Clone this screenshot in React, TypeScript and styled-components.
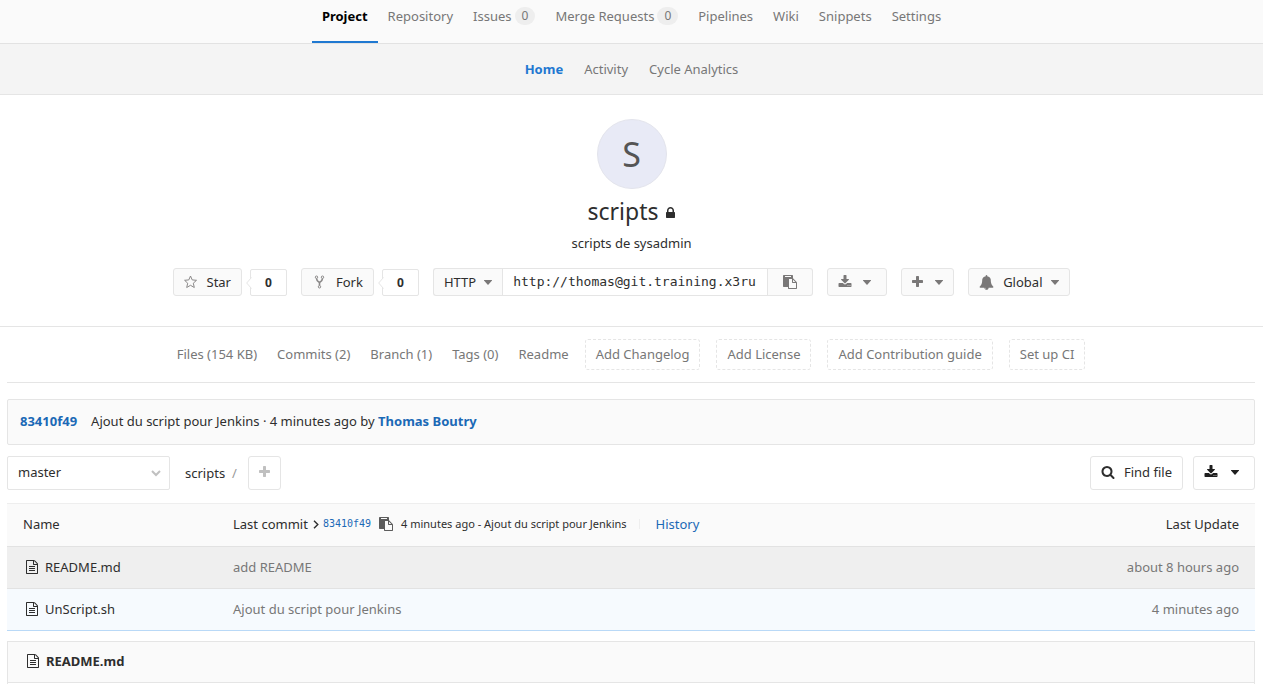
import React from "react";
import styled, { createGlobalStyle, css } from "styled-components";

const color = {
  text: "#2e2e2e",
  muted: "#777777",
  border: "#e5e5e5",
  light: "#fafafa",
  link: "#1b69b6",
  accent: "#1f78d1",
  icon: "#7a7878",
};

const GlobalStyle = createGlobalStyle`
  *, *::before, *::after { box-sizing: border-box; }
  body {
    margin: 0;
    background: #ffffff;
    color: ${color.text};
    font-family: "Noto Sans", sans-serif;
    font-size: 13px;
    line-height: 20px;
  }
  a { color: inherit; text-decoration: none; }
  button, input, select { font: inherit; color: inherit; margin: 0; }
  button { cursor: pointer; }
  svg { display: block; flex: none; }
`;

const Page = styled.div`
  display: flex;
  flex-direction: column;
  min-height: 100vh;
`;

/* Icons */

const glyphs = {
  download:
    "M1344 1344q0-26-19-45t-45-19-45 19-19 45 19 45 45 19 45-19 19-45zm256 0q0-26-19-45t-45-19-45 19-19 45 19 45 45 19 45-19 19-45zm128-224v320q0 40-28 68t-68 28h-1472q-40 0-68-28t-28-68v-320q0-40 28-68t68-28h465l135 136q58 56 136 56t136-56l136-136h464q40 0 68 28t28 68zm-325-569q17 41-14 70l-448 448q-18 19-45 19t-45-19l-448-448q-31-29-14-70 17-39 59-39h256v-448q0-26 19-45t45-19h256q26 0 45 19t19 45v448h256q42 0 59 39z",
  file:
    "M1596 380q28 28 48 76t20 88v1152q0 40-28 68t-68 28h-1344q-40 0-68-28t-28-68v-1600q0-40 28-68t68-28h896q40 0 88 20t76 48zm-444-244v376h376q-10-29-22-41l-313-313q-12-12-41-22zm384 1528v-1024h-416q-40 0-68-28t-28-68v-416h-768v1536h1280zm-1024-864q0-14 9-23t23-9h704q14 0 23 9t9 23v64q0 14-9 23t-23 9h-704q-14 0-23-9t-9-23v-64zm736 224q14 0 23 9t9 23v64q0 14-9 23t-23 9h-704q-14 0-23-9t-9-23v-64q0-14 9-23t23-9h704zm0 256q14 0 23 9t9 23v64q0 14-9 23t-23 9h-704q-14 0-23-9t-9-23v-64q0-14 9-23t23-9h704z",
  bell:
    "M912 1696q0-16-16-16-59 0-101.5-42.5t-42.5-101.5q0-16-16-16t-16 16q0 73 51.5 124.5t124.5 51.5q16 0 16-16zm816-288q0 52-38 90t-90 38h-448q0 106-75 181t-181 75-181-75-75-181h-448q-52 0-90-38t-38-90q50-42 91-88t85-119.5 74.5-158.5 50-206 19.5-260q0-152 117-282.5t307-158.5q-8-19-8-39 0-40 28-68t68-28 68 28 28 68q0 20-8 39 190 28 307 158.5t117 282.5q0 139 19.5 260t50 206 74.5 158.5 85 119.5 91 88z",
  search:
    "M1216 832q0-185-131.5-316.5t-316.5-131.5-316.5 131.5-131.5 316.5 131.5 316.5 316.5 131.5 316.5-131.5 131.5-316.5zm512 832q0 52-38 90t-90 38q-54 0-90-38l-343-342q-179 124-399 124-143 0-273.5-55.5t-225-150-150-225-55.5-273.5 55.5-273.5 150-225 225-150 273.5-55.5 273.5 55.5 225 150 150 225 55.5 273.5q0 220-124 399l343 343q37 37 37 90z",
  plus:
    "M1600 736v192q0 40-28 68t-68 28h-416v416q0 40-28 68t-68 28h-192q-40 0-68-28t-28-68v-416h-416q-40 0-68-28t-28-68v-192q0-40 28-68t68-28h416v-416q0-40 28-68t68-28h192q40 0 68 28t28 68v416h416q40 0 68 28t28 68z",
  lock:
    "M640 768h512v-192q0-106-75-181t-181-75-181 75-75 181v192zm832 96v576q0 40-28 68t-68 28h-960q-40 0-68-28t-28-68v-576q0-40 28-68t68-28h32v-192q0-184 132-316t316-132 316 132 132 316v192h32q40 0 68 28t28 68z",
  clipboard:
    "M768 1664h896v-640h-416q-40 0-68-28t-28-68v-416h-384v1152zm256-1440v-64q0-13-9.5-22.5t-22.5-9.5h-704q-13 0-22.5 9.5t-9.5 22.5v64q0 13 9.5 22.5t22.5 9.5h704q13 0 22.5-9.5t9.5-22.5zm256 672h299l-299-299v299zm512 128v672q0 40-28 68t-68 28h-960q-40 0-68-28t-28-68v-160h-544q-40 0-68-28t-28-68v-1344q0-40 28-68t68-28h1088q40 0 68 28t28 68v328q21 13 36 28l408 408q28 28 48 76t20 88z",
};

type GlyphProps = { name: keyof typeof glyphs; size?: number; width?: number; fill?: string };

/* A glyph narrower than its square is trimmed evenly on both sides. */
const Glyph = ({ name, size = 14, width = size, fill = color.icon }: GlyphProps) => {
  const span = (1792 * width) / size;
  return (
    <svg width={width} height={size} viewBox={`${(1792 - span) / 2} 0 ${span} 1792`} fill={fill} aria-hidden="true">
      <path d={glyphs[name]} />
    </svg>
  );
};

const Caret = ({ fill = color.icon }: { fill?: string }) => (
  <svg width="8" height="5" viewBox="0 0 8 5" fill={fill} aria-hidden="true">
    <path d="M0.4 0h7.200q0.800 0 0.200 0.800L4.500 4.600q-0.500 0.500-1 0L0.200 0.800Q-0.400 0 0.400 0z" />
  </svg>
);

const StarIcon = () => (
  <svg width="14" height="14" viewBox="0 0 14 14" fill="none" stroke="#8a8888" strokeLinejoin="round" aria-hidden="true">
    <path d="M6.500 1l1.700 3.900 4.300.4-3.200 2.900 1 4.300-3.800-2.200-3.800 2.200 1-4.300L.6 5.300l4.200-.4z" />
  </svg>
);

const ForkIcon = () => (
  <svg width="16" height="14" viewBox="0 0 16 14" fill="none" stroke="#8a8888" aria-hidden="true">
    <circle cx="4.500" cy="2.200" r="1.200" />
    <circle cx="10.500" cy="2.200" r="1.200" />
    <circle cx="7.500" cy="11.800" r="1.200" />
    <path d="M4.500 3.600c0 2 .8 2.700 3 4.100 2.200-1.400 3-2.100 3-4.100M7.500 7.500v3" strokeWidth="1.600" />
  </svg>
);

/* Navigation */

const MainNav = styled.nav`
  display: flex;
  justify-content: center;
  background: ${color.light};
  border-bottom: 1px solid #e2e2e2;
`;

const NavLink = styled.a<{ $active?: boolean }>`
  display: flex;
  align-items: center;
  gap: 3px;
  padding: 6px 10px 15px;
  color: ${color.muted};
  border-bottom: 2px solid transparent;
  ${(p) =>
    p.$active &&
    css`
      color: #000000;
      font-weight: 700;
      border-bottom-color: ${color.accent};
    `}
`;

const Badge = styled.span`
  padding: 0 7px;
  border-radius: 9px;
  background: #eeeeee;
  font-size: 12px;
  line-height: 18px;
`;

const SubNav = styled.nav`
  display: flex;
  justify-content: center;
  gap: 21px;
  padding: 15px 0;
  background: #f4f4f4;
  border-bottom: 1px solid ${color.border};
  color: ${color.muted};
`;

const SubLink = styled.a<{ $active?: boolean }>`
  color: ${(p) => (p.$active ? color.accent : "inherit")};
  font-weight: ${(p) => (p.$active ? 700 : 400)};
`;

/* Project header */

const ProjectHeader = styled.header`
  display: flex;
  flex-direction: column;
  align-items: center;
  padding: 24px 0 30px;
  border-bottom: 1px solid ${color.border};
`;

const Avatar = styled.div`
  width: 70px;
  height: 70px;
  border: 1px solid #e3e4ec;
  border-radius: 50%;
  background: #e8eaf6;
  color: #555555;
  font-size: 34px;
  line-height: 68px;
  text-align: center;
`;

const Title = styled.h1`
  display: flex;
  align-items: center;
  gap: 8px;
  margin: 6px 0;
  font-size: 23px;
  font-weight: 400;
  line-height: 32px;
`;

const LockMark = styled.span`
  padding-top: 4px;
`;

const Description = styled.p`
  margin: 0;
`;

const Actions = styled.div`
  display: flex;
  align-items: center;
  gap: 14px;
  margin-top: 15px;
  padding-right: 20px;
`;

const ActionGroup = styled.div<{ $gap?: number }>`
  display: flex;
  align-items: flex-end;
  gap: ${(p) => p.$gap ?? 0}px;
`;

const Button = styled.button<{ $gap?: number; $tall?: boolean; $end?: number; $join?: "left" | "right" }>`
  display: flex;
  align-items: center;
  justify-content: center;
  gap: ${(p) => p.$gap ?? 9}px;
  height: ${(p) => (p.$tall ? 34 : 28)}px;
  padding: 0 ${(p) => p.$end ?? 10}px ${(p) => (p.$tall ? 2 : 0)}px 10px;
  border: 1px solid ${color.border};
  border-radius: 3px;
  background: ${(p) => (p.$tall ? "#ffffff" : color.light)};
  white-space: nowrap;
  ${(p) => p.$join === "left" && "border-radius: 3px 0 0 3px; border-right: 0;"}
  ${(p) => p.$join === "right" && "border-radius: 0 3px 3px 0; border-left: 0; padding: 0 15px;"}
`;

const CountBox = styled.a`
  position: relative;
  width: 37px;
  height: 27px;
  border: 1px solid ${color.border};
  border-radius: 2px;
  background: #ffffff;
  font-weight: 700;
  font-size: 12px;
  line-height: 25px;
  text-align: center;
`;

const Pointer = styled.svg`
  position: absolute;
  left: -5px;
  top: 7px;
`;

const Count = ({ value, label }: { value: number; label: string }) => (
  <CountBox href="#" aria-label={label}>
    <Pointer width="6" height="12" viewBox="0 0 6 12" fill="#ffffff" stroke="#e5e5e5">
      <path d="M5.500 0.500L0.700 6L5.500 11.500" />
    </Pointer>
    {value}
  </CountBox>
);

const UrlInput = styled.input`
  width: 266px;
  height: 28px;
  padding: 0 10px 2px;
  border: 1px solid ${color.border};
  border-radius: 0;
  background: #ffffff;
  font-family: "DejaVu Sans Mono", monospace;
`;

/* Statistics row */

const Content = styled.main`
  display: flex;
  flex: 1;
  flex-direction: column;
  padding: 0 8px 0 7px;
`;

const Stats = styled.nav`
  display: flex;
  align-items: baseline;
  justify-content: center;
  gap: 16px;
  padding: 12px 0;
  border-bottom: 1px solid ${color.border};
  color: ${color.muted};
`;

const StatLinks = styled.div`
  display: flex;
  gap: 20px;
`;

const AddLink = styled.a`
  height: 31px;
  padding: 0 10px;
  border: 1px dashed ${color.border};
  border-radius: 3px;
  line-height: 29px;
`;

/* Commit and file toolbar */

const CommitBox = styled.section`
  margin-top: 16px;
  padding: 11px 12px 13px;
  border: 1px solid ${color.border};
  border-radius: 2px;
  background: ${color.light};
`;

const StrongLink = styled.a<{ $spaced?: boolean }>`
  margin-right: ${(p) => (p.$spaced ? 14 : 0)}px;
  color: ${color.link};
  font-weight: 700;
`;

const Toolbar = styled.div`
  display: flex;
  align-items: center;
  margin: 11px 0 13px;
`;

const SelectBox = styled.div`
  position: relative;
  width: 163px;
  margin-right: 15px;
`;

const BranchSelect = styled.select`
  display: block;
  width: 100%;
  height: 34px;
  padding: 0 10px 2px;
  appearance: none;
  border: 1px solid ${color.border};
  border-radius: 2px;
  background: #ffffff;
`;

const SelectArrow = styled.svg`
  position: absolute;
  right: 9px;
  top: 14px;
  pointer-events: none;
`;

const Slash = styled.span`
  margin: 0 11px 0 7px;
  color: #999999;
`;

const ToolbarEnd = styled.div`
  display: flex;
  gap: 10px;
  margin-left: auto;
`;

/* File table */

const FileTable = styled.table`
  width: 100%;
  border-collapse: separate;
  border-spacing: 0;
  border-top: 1px solid #eeeeee;
`;

const Row = styled.tr<{ $tone?: "hover" | "latest" }>`
  background: ${(p) => (p.$tone === "hover" ? "#efefef" : p.$tone === "latest" ? "#f6fafe" : color.light)};
  color: ${(p) => (p.$tone ? color.muted : color.text)};
  td, th {
    height: ${(p) => (p.$tone ? 42 : 43)}px;
    padding: 0 16px 2px 0;
    border-bottom: 1px solid ${(p) => (p.$tone === "latest" ? "#b9d9f7" : "#e2e2e2")};
    font-weight: 400;
    text-align: left;
  }
  td:first-child, th:first-child {
    width: 226px;
    padding-left: 16px;
  }
  td:last-child, th:last-child {
    text-align: right;
  }
`;

const FileName = styled.a<{ $bold?: boolean }>`
  display: flex;
  align-items: center;
  gap: 6px;
  padding-left: 2px;
  color: ${color.text};
  font-weight: ${(p) => (p.$bold ? 700 : 400)};
`;

const LastCommit = styled.div`
  display: flex;
  align-items: center;
`;

const Hash = styled.a`
  margin: 0 8px 0 4px;
  color: ${color.link};
  font-family: "DejaVu Sans Mono", monospace;
  font-size: 10px;
`;

const CopyButton = styled.button`
  padding: 0;
  border: 0;
  background: none;
`;

const CommitNote = styled.span`
  margin: 0 12px 0 8px;
  font-size: 11px;
`;

const HistoryLink = styled.a`
  padding-left: 16px;
  color: ${color.link};
`;

const Divider = styled.span`
  width: 1px;
  height: 10px;
  background: #eeeeee;
`;

const AngleRight = styled.svg`
  margin-left: 5px;
`;

/* Readme */

const ReadmePanel = styled.section`
  flex: 1;
  margin-top: 10px;
  border: 1px solid ${color.border};
  border-bottom: 0;
`;

const ReadmeHead = styled.h2`
  margin: 0;
  padding: 9px 16px 11px;
  border-bottom: 1px solid ${color.border};
  background: ${color.light};
  font-size: 13px;
`;

const navItems = [
  { label: "Project", active: true },
  { label: "Repository" },
  { label: "Issues", count: 0 },
  { label: "Merge Requests", count: 0 },
  { label: "Pipelines" },
  { label: "Wiki" },
  { label: "Snippets" },
  { label: "Settings" },
];

const stats = ["Files (154 KB)", "Commits (2)", "Branch (1)", "Tags (0)", "Readme"];
const additions = ["Add Changelog", "Add License", "Add Contribution guide", "Set up CI"];

const files = [
  { name: "README.md", message: "add README", updated: "about 8 hours ago", tone: "hover" as const },
  { name: "UnScript.sh", message: "Ajout du script pour Jenkins", updated: "4 minutes ago", tone: "latest" as const },
];

export default function App() {
  return (
    <Page>
      <GlobalStyle />
      <MainNav aria-label="Project">
        {navItems.map((item) => (
          <NavLink key={item.label} href="#" $active={item.active}>
            {item.label}
            {item.count !== undefined && <Badge>{item.count}</Badge>}
          </NavLink>
        ))}
      </MainNav>
      <SubNav aria-label="Project pages">
        <SubLink href="#" $active>Home</SubLink>
        <SubLink href="#">Activity</SubLink>
        <SubLink href="#">Cycle Analytics</SubLink>
      </SubNav>

      <ProjectHeader>
        <Avatar>S</Avatar>
        <Title>
          scripts
          <LockMark><Glyph name="lock" width={9} fill={color.text} /></LockMark>
        </Title>
        <Description>scripts de sysadmin</Description>
        <Actions>
          <ActionGroup $gap={8}>
            <Button type="button"><StarIcon />Star</Button>
            <Count value={0} label="Stars" />
          </ActionGroup>
          <ActionGroup $gap={8}>
            <Button type="button" $gap={8}><ForkIcon />Fork</Button>
            <Count value={0} label="Forks" />
          </ActionGroup>
          <ActionGroup>
            <Button type="button" $gap={8} $join="left">HTTP<Caret /></Button>
            <UrlInput type="text" readOnly aria-label="Project clone URL" value="http://thomas@git.training.x3ru" />
            <Button type="button" $join="right" aria-label="Copy URL"><Glyph name="clipboard" /></Button>
          </ActionGroup>
          <Button type="button" $gap={11} $end={15} aria-label="Download"><Glyph name="download" /><Caret /></Button>
          <Button type="button" $gap={12} aria-label="Create new"><Glyph name="plus" width={11} /><Caret /></Button>
          <Button type="button" aria-label="Notifications: Global"><Glyph name="bell" size={15} />Global<Caret /></Button>
        </Actions>
      </ProjectHeader>

      <Content>
        <Stats aria-label="Project statistics">
          <StatLinks>
            {stats.map((s) => <a key={s} href="#">{s}</a>)}
          </StatLinks>
          {additions.map((s) => <AddLink key={s} href="#">{s}</AddLink>)}
        </Stats>

        <CommitBox>
          <StrongLink href="#" $spaced>83410f49</StrongLink>
          <a href="#">Ajout du script pour Jenkins</a> · 4 minutes ago by <StrongLink href="#">Thomas Boutry</StrongLink>
        </CommitBox>

        <Toolbar>
          <SelectBox>
            <BranchSelect aria-label="Branch" defaultValue="master">
              <option>master</option>
            </BranchSelect>
            <SelectArrow width="10" height="7" viewBox="0 0 10 7" fill="none" stroke="#c0c0c0" strokeWidth="2">
              <path d="M1 1l4 4 4-4" />
            </SelectArrow>
          </SelectBox>
          <a href="#">scripts</a>
          <Slash>/</Slash>
          <Button type="button" $tall aria-label="Add to tree"><Glyph name="plus" width={11} fill="#c0c0c0" /></Button>
          <ToolbarEnd>
            <Button type="button" $tall><Glyph name="search" fill={color.text} />Find file</Button>
            <Button type="button" $tall $gap={13} $end={15} aria-label="Download source">
              <Glyph name="download" fill="#1f1f1f" /><Caret fill="#1f1f1f" />
            </Button>
          </ToolbarEnd>
        </Toolbar>

        <FileTable>
          <thead>
            <Row>
              <th scope="col">Name</th>
              <th scope="col">
                <LastCommit>
                  Last commit
                  <AngleRight width="6" height="9" viewBox="0 0 6 9" fill="none" stroke="#2e2e2e" strokeWidth="1.400">
                    <path d="M1 0.700l3.800 3.800L1 8.300" />
                  </AngleRight>
                  <Hash href="#">83410f49</Hash>
                  <CopyButton type="button" aria-label="Copy commit SHA"><Glyph name="clipboard" fill="#5c5c5c" /></CopyButton>
                  <CommitNote>4 minutes ago - Ajout du script pour Jenkins</CommitNote>
                  <Divider />
                  <HistoryLink href="#">History</HistoryLink>
                </LastCommit>
              </th>
              <th scope="col">Last Update</th>
            </Row>
          </thead>
          <tbody>
            {files.map((f) => (
              <Row key={f.name} $tone={f.tone}>
                <td><FileName href="#"><Glyph name="file" fill={color.text} />{f.name}</FileName></td>
                <td>{f.message}</td>
                <td>{f.updated}</td>
              </Row>
            ))}
          </tbody>
        </FileTable>

        <ReadmePanel>
          <ReadmeHead>
            <FileName href="#" $bold><Glyph name="file" fill={color.text} />README.md</FileName>
          </ReadmeHead>
        </ReadmePanel>
      </Content>
    </Page>
  );
}
